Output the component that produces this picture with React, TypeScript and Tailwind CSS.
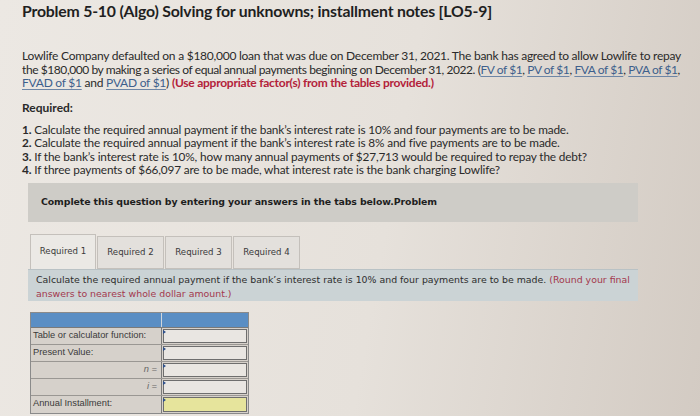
import React from "react";

const body = { fontFamily: "Lato, 'Open Sans', sans-serif" };
const verdana = { fontFamily: "'DejaVu Sans', Verdana, sans-serif" };

function Link({ children }: { children: React.ReactNode }) {
  return <span className="text-[#3d5f8c] underline decoration-[#6d86a6] underline-offset-2">{children}</span>;
}

const rows = [
  { label: "Table or calculator function:", align: "left" },
  { label: "Present Value:", align: "left" },
  { label: "n =", align: "right", italic: true },
  { label: "i =", align: "right", italic: true },
  { label: "Annual Installment:", align: "left", total: true },
];

export default function App() {
  return (
    <div
      className="w-[700px] h-[416px] overflow-hidden text-[#2a2a2a] bg-[linear-gradient(100deg,#ece8e3_0%,#e6e1db_55%,#d3cbc3_100%)]"
      style={body}
    >
      <div className="pl-[22px] pt-[1px]">
        <h1 className="text-[15.8px] font-bold tracking-[-0.2px] leading-[20px] text-[#1f1f1f]">
          Problem 5-10 (Algo) Solving for unknowns; installment notes [LO5-9]
        </h1>

        <div className="mt-[28px] text-[12px] leading-[13.5px] tracking-[-0.25px] whitespace-nowrap">
          <div>Lowlife Company defaulted on a $180,000 loan that was due on December 31, 2021. The bank has agreed to allow Lowlife to repay</div>
          <div className="tracking-[-0.42px]">
            the $180,000 by making a series of equal annual payments beginning on December 31, 2022. (<Link>FV of $1</Link>, <Link>PV of $1</Link>, <Link>FVA of $1</Link>, <Link>PVA of $1</Link>,
          </div>
          <div>
            <Link>FVAD of $1</Link> and <Link>PVAD of $1</Link>){" "}
            <span className="font-bold text-[#b3223a]">(Use appropriate factor(s) from the tables provided.)</span>
          </div>
        </div>

        <div className="mt-[11px] text-[12px] font-bold leading-[14px]">Required:</div>

        <div className="mt-[8px] text-[11.8px] leading-[13.6px] tracking-[-0.15px] whitespace-nowrap">
          <div><b>1.</b> Calculate the required annual payment if the bank’s interest rate is 10% and four payments are to be made.</div>
          <div><b>2.</b> Calculate the required annual payment if the bank’s interest rate is 8% and five payments are to be made.</div>
          <div><b>3.</b> If the bank’s interest rate is 10%, how many annual payments of $27,713 would be required to repay the debt?</div>
          <div><b>4.</b> If three payments of $66,097 are to be made, what interest rate is the bank charging Lowlife?</div>
        </div>
      </div>

      <div className="ml-[28px] mt-[6px] w-[610px] h-[39px] bg-[#ceccc7] flex items-center pl-[13px]" style={verdana}>
        <span className="text-[9.4px] font-bold text-[#1e1e1e] tracking-[-0.1px]">
          Complete this question by entering your answers in the tabs below.Problem
        </span>
      </div>

      <div className="ml-[30px] mt-[12px] flex items-end" style={verdana}>
        {["Required 1", "Required 2", "Required 3", "Required 4"].map((t, i) => (
          <div
            key={t}
            className={
              "mr-[1px] flex items-center justify-center border border-[#c4c0bb] text-[8.6px] text-[#3a3a3a] " +
              (i === 0 ? "w-[66px] h-[35px] bg-[#ebe9e5] border-b-0" : "w-[67px] h-[33px] bg-[#e3e0dc]")
            }
          >
            {t}
          </div>
        ))}
      </div>

      <div
        className="ml-[28px] w-[610px] h-[32px] bg-[#cbd3d5] border-t border-[#b9c2c5] pl-[8px] pt-[2px] text-[9.4px] leading-[15px] text-[#2d2d2d] whitespace-nowrap"
        style={verdana}
      >
        <div>
          Calculate the required annual payment if the bank’s interest rate is 10% and four payments are to be made.{" "}
          <span className="text-[#a3384d]">(Round your final</span>
        </div>
        <div className="text-[#a3384d] -mt-[1px]">answers to nearest whole dollar amount.)</div>
      </div>

      <div className="ml-[30px] mt-[11px] w-[219px] border border-[#8a8a8a] bg-[#d6d1cb]" style={{ fontFamily: "'Liberation Sans', Arial, sans-serif" }}>
        <div className="flex h-[15px] bg-[#5a8ec4] border-b border-[#7a7a7a]">
          <div className="w-[131px] border-r border-[#d0d6dc]" />
          <div className="flex-1" />
        </div>
        {rows.map((r) => (
          <div key={r.label} className="flex h-[17px] border-b border-[#9a9793] last:border-b-0">
            <div
              className={
                "w-[131px] border-r border-[#7a7a7a] px-[2px] flex items-center text-[9.3px] text-[#3a3a3a] " +
                (r.align === "right" ? "justify-end pr-[4px] italic text-[#666]" : "")
              }
            >
              {r.label}
            </div>
            <div className="flex-1 p-[1px] relative">
              <div className={"h-full border border-[#6e6e6e] " + (r.total ? "bg-[#e6e49c]" : "bg-[#e9e6e2]")} />
              <div className="absolute left-[1px] top-[2px] w-0 h-0 border-y-[2px] border-y-transparent border-l-[3px] border-l-[#2d4f8a]" />
            </div>
          </div>
        ))}
      </div>
    </div>
  );
}
